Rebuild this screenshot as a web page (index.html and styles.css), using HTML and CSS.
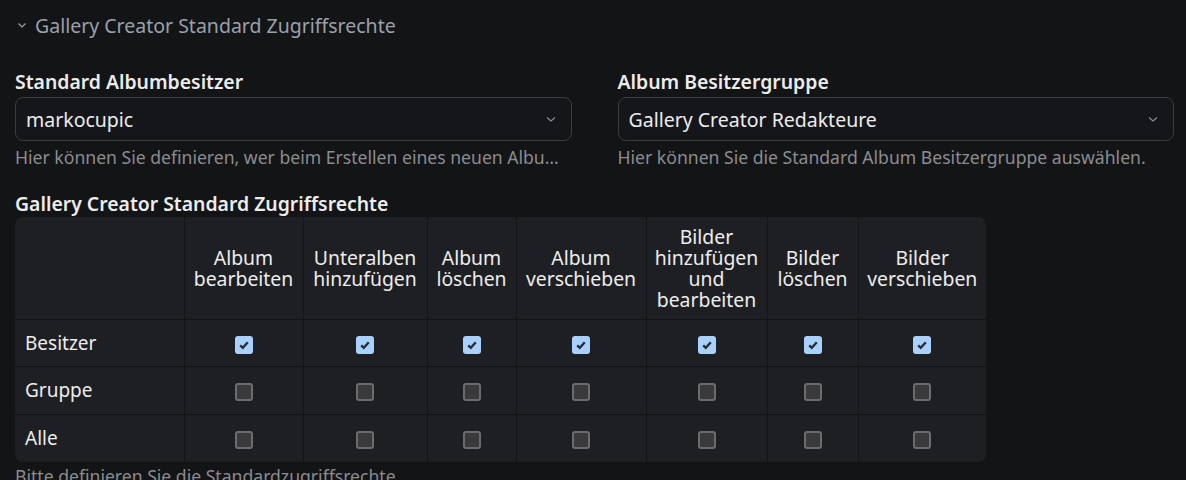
FILE: index.html
```html
<!DOCTYPE html>
<html lang="de">
<head>
    <title>Gallery Creator Standard Zugriffsrechte</title>
    <link rel="stylesheet" href="styles.css">
</head>
<body>
    <div class="panel">
        <div class="legend">
            <svg class="legend-icon" width="10" height="10" viewBox="0 0 10 10"><path d="M1.5 3.5 L5 7 L8.5 3.5" fill="none" stroke="currentColor" stroke-width="1.2"/></svg>
            <span>Gallery Creator Standard Zugriffsrechte</span>
        </div>

        <div class="fields">
            <div class="field">
                <label>Standard Albumbesitzer</label>
                <div class="select">
                    <span>markocupic</span>
                    <svg class="chevron" width="12" height="12" viewBox="0 0 12 12"><path d="M2 4.5 L6 8 L10 4.5" fill="none" stroke="currentColor" stroke-width="1.2"/></svg>
                </div>
                <p class="help">Hier können Sie definieren, wer beim Erstellen eines neuen Albums Standardbesitzer wird.</p>
            </div>
            <div class="field">
                <label>Album Besitzergruppe</label>
                <div class="select">
                    <span>Gallery Creator Redakteure</span>
                    <svg class="chevron" width="12" height="12" viewBox="0 0 12 12"><path d="M2 4.5 L6 8 L10 4.5" fill="none" stroke="currentColor" stroke-width="1.2"/></svg>
                </div>
                <p class="help">Hier können Sie die Standard Album Besitzergruppe auswählen.</p>
            </div>
        </div>

        <div class="perm">
            <label>Gallery Creator Standard Zugriffsrechte</label>
            <div class="perm-table">
                <table>
                    <colgroup>
                        <col style="width:169px">
                        <col style="width:119px">
                        <col style="width:124px">
                        <col style="width:89px">
                        <col style="width:130px">
                        <col style="width:121px">
                        <col style="width:91px">
                        <col style="width:128px">
                    </colgroup>
                    <thead>
                        <tr>
                            <th></th>
                            <th>Album bearbeiten</th>
                            <th>Unteralben hinzufügen</th>
                            <th>Album löschen</th>
                            <th>Album verschieben</th>
                            <th>Bilder hinzufügen und bearbeiten</th>
                            <th>Bilder löschen</th>
                            <th>Bilder verschieben</th>
                        </tr>
                    </thead>
                    <tbody id="rows"></tbody>
                </table>
            </div>
            <p class="help">Bitte definieren Sie die Standardzugriffsrechte</p>
        </div>
    </div>

    <script>
        const rows = [
            { name: "Besitzer", checked: true },
            { name: "Gruppe", checked: false },
            { name: "Alle", checked: false }
        ];
        const check = '<svg width="12" height="12" viewBox="0 0 12 12"><path d="M2.2 6.3 L4.8 8.8 L9.8 3.2" fill="none" stroke="#2b2d31" stroke-width="2.4"/></svg>';
        let html = "";
        rows.forEach(r => {
            html += "<tr><td>" + r.name + "</td>";
            for (let i = 0; i < 7; i++) {
                html += '<td><span class="cb' + (r.checked ? ' checked">' + check : '">') + "</span></td>";
            }
            html += "</tr>";
        });
        document.getElementById("rows").innerHTML = html;
    </script>
</body>
</html>
```

FILE: styles.css
```css
* {
    margin: 0;
    padding: 0;
    box-sizing: border-box;
    font-family: 'Noto Sans', 'Open Sans', sans-serif;
}

body {
    background: #131416;
    color: #e6e6e6;
}

.panel {
    padding: 0 12px 0 15px;
}

.legend {
    display: flex;
    align-items: center;
    gap: 8px;
    height: 50px;
    color: #9aa1ab;
    font-size: 19.5px;
}

.legend-icon {
    margin-left: 2px;
}

.fields {
    display: grid;
    grid-template-columns: minmax(0, 1fr) minmax(0, 1fr);
    column-gap: 46px;
    margin-top: 20px;
}

label {
    display: block;
    font-weight: 600;
    font-size: 19.4px;
    line-height: 24px;
    color: #ececec;
}

.select {
    display: flex;
    align-items: center;
    justify-content: space-between;
    height: 44px;
    margin-top: 3px;
    padding: 0 14px 0 10px;
    border: 1px solid #3b3c40;
    border-radius: 8px;
    background: #151619;
    font-size: 19.5px;
    color: #ececec;
}

.chevron {
    color: #8a8d92;
}

.help {
    font-size: 17.6px;
    line-height: 22px;
    margin-top: 5px;
    color: #8b8c8f;
    white-space: nowrap;
    overflow: hidden;
    text-overflow: ellipsis;
}

.perm {
    margin-top: 24px;
}

.perm-table {
    width: 971px;
    margin-top: 1px;
    border-radius: 8px;
    overflow: hidden;
    background: #1e1f23;
}

table {
    border-collapse: collapse;
    table-layout: fixed;
    width: 971px;
}

th, td {
    border: 1px solid #131416;
    color: #ececec;
}

tr > :first-child {
    border-left: none;
}

tr > :last-child {
    border-right: none;
}

thead tr > * {
    border-top: none;
}

tbody tr:last-child > * {
    border-bottom: none;
}

th {
    height: 102px;
    font-weight: 400;
    font-size: 19.4px;
    line-height: 21px;
    text-align: center;
    padding: 0 2px;
}

td {
    height: 47.5px;
    text-align: center;
    font-size: 19px;
}

td:first-child {
    text-align: left;
    padding-left: 10px;
}

.cb {
    display: inline-flex;
    align-items: center;
    justify-content: center;
    width: 18px;
    height: 18px;
    border-radius: 3px;
    border: 2px solid #6b6c6f;
    background: #3a3a3d;
    vertical-align: middle;
}

.cb.checked {
    border: none;
    background: #a9d1ff;
}

.perm .help {
    margin-top: 3px;
}
```
